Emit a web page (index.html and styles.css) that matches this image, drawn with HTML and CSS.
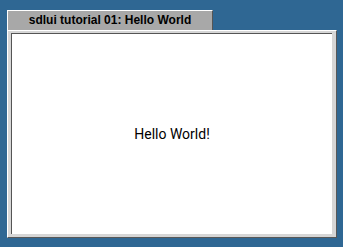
FILE: index.html
```html
<!DOCTYPE html>
<html lang="en">
<head>
  <meta charset="UTF-8">
  <title>sdlui tutorial 01: Hello World</title>
  <link rel="stylesheet" href="styles.css">
</head>
<body>
  <div id="desktop">
    <div class="tab">sdlui tutorial 01: Hello World</div>
    <div class="window">
      <div class="content">
        <p class="label">Hello World!</p>
      </div>
    </div>
  </div>
</body>
</html>
```
FILE: styles.css
```css
* {
  margin: 0;
  padding: 0;
  box-sizing: border-box;
}

body {
  background-color: #2f6793;
  width: 343px;
  height: 247px;
  overflow: hidden;
}

#desktop {
  padding: 10px 0 0 7px;
}

.tab {
  width: 206px;
  height: 20px;
  background-color: #a8a8a8;
  border-top: 1px solid #ffffff;
  border-left: 1px solid #ffffff;
  border-right: 1px solid #555555;
  font-family: "Liberation Sans", Arial, sans-serif;
  font-weight: bold;
  font-size: 12px;
  line-height: 19px;
  text-align: center;
  color: #000;
}

.window {
  width: 330px;
  height: 208px;
  background-color: #d6d6d6;
  border: 1px solid #ffffff;
  border-right-color: #585858;
  border-bottom-color: #585858;
  padding: 2px 4px 3px 3px;
}

.content {
  height: 100%;
  background-color: #ffffff;
  border-top: 1px solid #555555;
  border-left: 1px solid #555555;
  display: flex;
  align-items: center;
  justify-content: center;
}

.label {
  font-family: Roboto, "Liberation Sans", sans-serif;
  font-size: 14px;
  color: #000;
}
```
